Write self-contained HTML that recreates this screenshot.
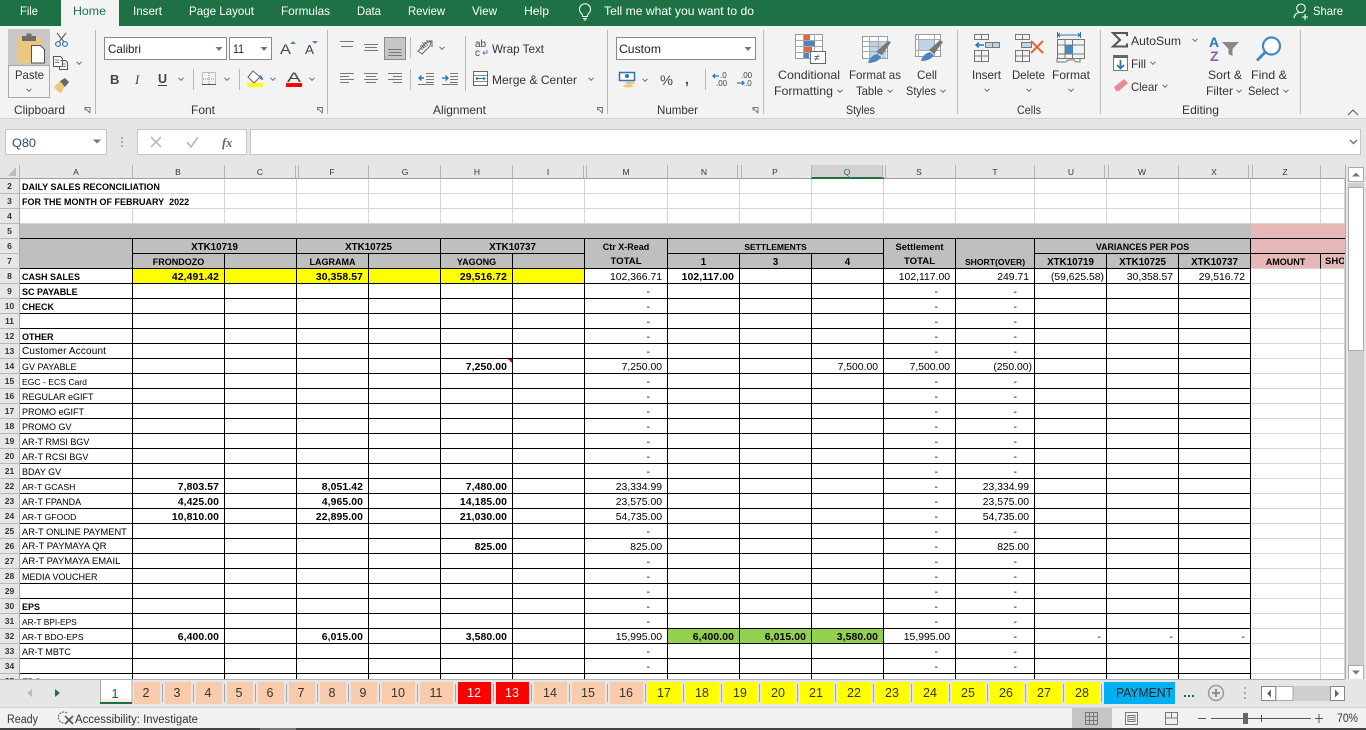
<!DOCTYPE html>
<html><head><meta charset="utf-8"><title>Daily Sales Reconciliation</title>
<style>
html,body{margin:0;padding:0;background:#e6e6e6}
body{width:1366px;height:730px;overflow:hidden;position:relative;font-family:"Liberation Sans",sans-serif}
#s{position:absolute;left:20px;top:179px;width:1325px;height:500px;overflow:hidden;background:#fff}
table{border-collapse:separate;border-spacing:0;table-layout:fixed;width:1325px}
td{height:15px;box-sizing:border-box;padding:2px 0 0 2px;border-right:1px solid #000;border-bottom:1px solid #000;font-size:9px;white-space:nowrap;overflow:hidden;line-height:12px;color:#000;text-align:left}
td:nth-last-child(-n+2){border-color:#d4d4d4}
tr.p td{border-color:#d4d4d4}
td.h,tr.k td.h{background:#bfbfbf;text-align:center;font-weight:bold;font-size:9px;padding:2px 0 0;border-color:#000}
tr.k td.x{font-size:9.8px;padding-top:3px;line-height:11px}
td.pk,tr.k td.pk{background:#e6b8b7;text-align:center;font-weight:bold;padding:2px 0 0}
td.nb,tr.k td.nb{border-bottom:0;padding-top:0}
td.n,td.d,td.e{text-align:right;font-size:10.4px;line-height:11px}
td.n,td.e{padding:3px 5px 0 0}
td.d{padding:3px 17px 0 0}
.b{font-weight:bold}
td.n.b{letter-spacing:.1px}
.y{background:#ff0}
.gr{background:#92d050}
#r{position:absolute;left:0;top:179px;width:20px;height:500px;overflow:hidden;background:#e6e6e6}
#r div{height:15px;box-sizing:border-box;border-bottom:1px solid #b8b8b8;border-right:1px solid #a8a8a8;text-align:center;font-size:8.5px;font-weight:bold;line-height:15px;color:#333}
svg{position:absolute;left:0;top:0}
svg text{font-family:"Liberation Sans",sans-serif;fill:#333}
svg text[style*="font-size:12px"]{font-size:11.6px!important}
</style></head><body>
<div id="r"><div>2</div><div>3</div><div>4</div><div>5</div><div>6</div><div>7</div><div>8</div><div>9</div><div>10</div><div>11</div><div>12</div><div>13</div><div>14</div><div>15</div><div>16</div><div>17</div><div>18</div><div>19</div><div>20</div><div>21</div><div>22</div><div>23</div><div>24</div><div>25</div><div>26</div><div>27</div><div>28</div><div>29</div><div>30</div><div>31</div><div>32</div><div>33</div><div>34</div><div>35</div></div>
<div id="s"><table>
<colgroup><col style="width:113px"><col style="width:92px"><col style="width:72px"><col style="width:72px"><col style="width:72px"><col style="width:72px"><col style="width:72px"><col style="width:83px"><col style="width:72px"><col style="width:72px"><col style="width:72px"><col style="width:72px"><col style="width:79px"><col style="width:72px"><col style="width:72px"><col style="width:72px"><col style="width:70px"><col style="width:24px"></colgroup>
<tr class="p"><td colspan="2" class="b">DAILY SALES RECONCILIATION</td><td></td><td></td><td></td><td></td><td></td><td></td><td></td><td></td><td></td><td></td><td></td><td></td><td></td><td></td><td></td><td></td></tr>
<tr class="p"><td colspan="2" class="b">FOR THE MONTH OF FEBRUARY&nbsp; 2022</td><td></td><td></td><td></td><td></td><td></td><td></td><td></td><td></td><td></td><td></td><td></td><td></td><td></td><td></td><td></td><td></td></tr>
<tr class="p"><td></td><td></td><td></td><td></td><td></td><td></td><td></td><td></td><td></td><td></td><td></td><td></td><td></td><td></td><td></td><td></td><td></td><td></td></tr>
<tr class="k"><td colspan="16" class="h" style="border-right:0"></td><td colspan="2" class="pk" style="border-right:0;border-bottom-color:#000"></td></tr>
<tr class="k"><td rowspan="2" class="h"></td><td colspan="2" class="h x">XTK10719</td><td colspan="2" class="h x">XTK10725</td><td colspan="2" class="h x">XTK10737</td><td class="h nb">Ctr X-Read</td><td colspan="3" class="h" style="font-size:8.5px">SETTLEMENTS</td><td class="h nb" style="font-size:9.4px">Settlement</td><td class="h nb"></td><td colspan="3" class="h" style="font-size:8.85px">VARIANCES PER POS</td><td colspan="2" class="pk" style="border-right:0;border-bottom-color:#000"></td></tr>
<tr class="k"><td class="h">FRONDOZO</td><td class="h"></td><td class="h">LAGRAMA</td><td class="h"></td><td class="h">YAGONG</td><td class="h"></td><td class="h" style="font-size:9.6px">TOTAL</td><td class="h x">1</td><td class="h x">3</td><td class="h x">4</td><td class="h" style="font-size:9.6px">TOTAL</td><td class="h" style="font-size:8.6px">SHORT(OVER)</td><td class="h x">XTK10719</td><td class="h x">XTK10725</td><td class="h x">XTK10737</td><td class="pk" style="border-right-color:#000">AMOUNT</td><td class="pk" style="text-align:left;padding-left:4px;font-size:9.5px">SHORT</td></tr>
<tr><td class="b">CASH SALES</td><td class="n b y">42,491.42</td><td class="y"></td><td class="n b y">30,358.57</td><td class="y"></td><td class="n b y">29,516.72</td><td class="y"></td><td class="n">102,366.71</td><td class="n b">102,117.00</td><td></td><td></td><td class="n">102,117.00</td><td class="n">249.71</td><td class="n" style="padding-right:2px">(59,625.58)</td><td class="n">30,358.57</td><td class="n">29,516.72</td><td></td><td></td></tr>
<tr><td class="b">SC PAYABLE</td><td></td><td></td><td></td><td></td><td></td><td></td><td class="d">-</td><td></td><td></td><td></td><td class="d">-</td><td class="d">-</td><td></td><td></td><td></td><td></td><td></td></tr>
<tr><td class="b">CHECK</td><td></td><td></td><td></td><td></td><td></td><td></td><td class="d">-</td><td></td><td></td><td></td><td class="d">-</td><td class="d">-</td><td></td><td></td><td></td><td></td><td></td></tr>
<tr><td></td><td></td><td></td><td></td><td></td><td></td><td></td><td class="d">-</td><td></td><td></td><td></td><td class="d">-</td><td class="d">-</td><td></td><td></td><td></td><td></td><td></td></tr>
<tr><td class="b">OTHER</td><td></td><td></td><td></td><td></td><td></td><td></td><td class="d">-</td><td></td><td></td><td></td><td class="d">-</td><td class="d">-</td><td></td><td></td><td></td><td></td><td></td></tr>
<tr><td style="font-size:10px;letter-spacing:.15px">Customer Account</td><td></td><td></td><td></td><td></td><td></td><td></td><td class="d">-</td><td></td><td></td><td></td><td class="d">-</td><td class="d">-</td><td></td><td></td><td></td><td></td><td></td></tr>
<tr><td>GV PAYABLE</td><td></td><td></td><td></td><td></td><td class="n b">7,250.00</td><td></td><td class="n">7,250.00</td><td></td><td></td><td class="n">7,500.00</td><td class="n">7,500.00</td><td class="n" style="padding-right:2px">(250.00)</td><td></td><td></td><td></td><td></td><td></td></tr>
<tr><td style="font-size:8.6px">EGC - ECS Card</td><td></td><td></td><td></td><td></td><td></td><td></td><td class="d">-</td><td></td><td></td><td></td><td class="d">-</td><td class="d">-</td><td></td><td></td><td></td><td></td><td></td></tr>
<tr><td>REGULAR eGIFT</td><td></td><td></td><td></td><td></td><td></td><td></td><td class="d">-</td><td></td><td></td><td></td><td class="d">-</td><td class="d">-</td><td></td><td></td><td></td><td></td><td></td></tr>
<tr><td>PROMO eGIFT</td><td></td><td></td><td></td><td></td><td></td><td></td><td class="d">-</td><td></td><td></td><td></td><td class="d">-</td><td class="d">-</td><td></td><td></td><td></td><td></td><td></td></tr>
<tr><td>PROMO GV</td><td></td><td></td><td></td><td></td><td></td><td></td><td class="d">-</td><td></td><td></td><td></td><td class="d">-</td><td class="d">-</td><td></td><td></td><td></td><td></td><td></td></tr>
<tr><td>AR-T RMSI BGV</td><td></td><td></td><td></td><td></td><td></td><td></td><td class="d">-</td><td></td><td></td><td></td><td class="d">-</td><td class="d">-</td><td></td><td></td><td></td><td></td><td></td></tr>
<tr><td>AR-T RCSI BGV</td><td></td><td></td><td></td><td></td><td></td><td></td><td class="d">-</td><td></td><td></td><td></td><td class="d">-</td><td class="d">-</td><td></td><td></td><td></td><td></td><td></td></tr>
<tr><td>BDAY GV</td><td></td><td></td><td></td><td></td><td></td><td></td><td class="d">-</td><td></td><td></td><td></td><td class="d">-</td><td class="d">-</td><td></td><td></td><td></td><td></td><td></td></tr>
<tr><td style="font-size:8.7px">AR-T GCASH</td><td class="n b">7,803.57</td><td></td><td class="n b">8,051.42</td><td></td><td class="n b">7,480.00</td><td></td><td class="n">23,334.99</td><td></td><td></td><td></td><td class="d">-</td><td class="n">23,334.99</td><td></td><td></td><td></td><td></td><td></td></tr>
<tr><td>AR-T FPANDA</td><td class="n b">4,425.00</td><td></td><td class="n b">4,965.00</td><td></td><td class="n b">14,185.00</td><td></td><td class="n">23,575.00</td><td></td><td></td><td></td><td class="d">-</td><td class="n">23,575.00</td><td></td><td></td><td></td><td></td><td></td></tr>
<tr><td style="font-size:8.7px">AR-T GFOOD</td><td class="n b">10,810.00</td><td></td><td class="n b">22,895.00</td><td></td><td class="n b">21,030.00</td><td></td><td class="n">54,735.00</td><td></td><td></td><td></td><td class="d">-</td><td class="n">54,735.00</td><td></td><td></td><td></td><td></td><td></td></tr>
<tr><td style="font-size:9.3px">AR-T ONLINE PAYMENT</td><td></td><td></td><td></td><td></td><td></td><td></td><td class="d">-</td><td></td><td></td><td></td><td class="d">-</td><td class="d">-</td><td></td><td></td><td></td><td></td><td></td></tr>
<tr><td style="font-size:9.55px">AR-T PAYMAYA QR</td><td></td><td></td><td></td><td></td><td class="n b">825.00</td><td></td><td class="n">825.00</td><td></td><td></td><td></td><td class="d">-</td><td class="n">825.00</td><td></td><td></td><td></td><td></td><td></td></tr>
<tr><td style="font-size:9.5px">AR-T PAYMAYA EMAIL</td><td></td><td></td><td></td><td></td><td></td><td></td><td class="d">-</td><td></td><td></td><td></td><td class="d">-</td><td class="d">-</td><td></td><td></td><td></td><td></td><td></td></tr>
<tr><td>MEDIA VOUCHER</td><td></td><td></td><td></td><td></td><td></td><td></td><td class="d">-</td><td></td><td></td><td></td><td class="d">-</td><td class="d">-</td><td></td><td></td><td></td><td></td><td></td></tr>
<tr><td></td><td></td><td></td><td></td><td></td><td></td><td></td><td class="d">-</td><td></td><td></td><td></td><td class="d">-</td><td class="d">-</td><td></td><td></td><td></td><td></td><td></td></tr>
<tr><td class="b">EPS</td><td></td><td></td><td></td><td></td><td></td><td></td><td class="d">-</td><td></td><td></td><td></td><td class="d">-</td><td class="d">-</td><td></td><td></td><td></td><td></td><td></td></tr>
<tr><td style="font-size:8.4px">AR-T BPI-EPS</td><td></td><td></td><td></td><td></td><td></td><td></td><td class="d">-</td><td></td><td></td><td></td><td class="d">-</td><td class="d">-</td><td></td><td></td><td></td><td></td><td></td></tr>
<tr><td style="font-size:8.7px">AR-T BDO-EPS</td><td class="n b">6,400.00</td><td></td><td class="n b">6,015.00</td><td></td><td class="n b">3,580.00</td><td></td><td class="n">15,995.00</td><td class="n b gr">6,400.00</td><td class="n b gr">6,015.00</td><td class="n b gr">3,580.00</td><td class="n">15,995.00</td><td class="d">-</td><td class="e">-</td><td class="e">-</td><td class="e">-</td><td></td><td></td></tr>
<tr><td>AR-T MBTC</td><td></td><td></td><td></td><td></td><td></td><td></td><td class="d">-</td><td></td><td></td><td></td><td class="d">-</td><td class="d">-</td><td></td><td></td><td></td><td></td><td></td></tr>
<tr><td></td><td></td><td></td><td></td><td></td><td></td><td></td><td class="d">-</td><td></td><td></td><td></td><td class="d">-</td><td class="d">-</td><td></td><td></td><td></td><td></td><td></td></tr>
<tr><td class="b">EDC</td><td></td><td></td><td></td><td></td><td></td><td></td><td class="d">-</td><td></td><td></td><td></td><td class="d">-</td><td class="d">-</td><td></td><td></td><td></td><td></td><td></td></tr>
</table></div>

<svg width="1366" height="730" viewBox="0 0 1366 730" xmlns="http://www.w3.org/2000/svg">
<defs><path id="c" d="M-2.5-1.2 0 1.3 2.5-1.2" fill="none" stroke="#666" stroke-width="1"/><path id="tr" d="M-3.5-2h7L0 2z" fill="#777"/>
<path id="lc" d="M0 .5h5.5v5.5M5.5 6L1 1.5M.5 3.5V.5" fill="none" stroke="#777"/></defs>

<!-- Title bar -->
<rect width="1366" height="26" fill="#1e7145"/>
<rect x="61" y="0" width="58" height="27" fill="#f3f3f3"/>
<g style="font-size:12px">
<text x="20" y="15" textLength="18" lengthAdjust="spacingAndGlyphs" style="fill:#fff">File</text>
<text x="73" y="15" textLength="33" lengthAdjust="spacingAndGlyphs" style="fill:#1e7145">Home</text>
<text x="133" y="15" textLength="29" lengthAdjust="spacingAndGlyphs" style="fill:#fff">Insert</text>
<text x="189" y="15" textLength="65" lengthAdjust="spacingAndGlyphs" style="fill:#fff">Page Layout</text>
<text x="281" y="15" textLength="49" lengthAdjust="spacingAndGlyphs" style="fill:#fff">Formulas</text>
<text x="357" y="15" textLength="24" lengthAdjust="spacingAndGlyphs" style="fill:#fff">Data</text>
<text x="408" y="15" textLength="37" lengthAdjust="spacingAndGlyphs" style="fill:#fff">Review</text>
<text x="472" y="15" textLength="25" lengthAdjust="spacingAndGlyphs" style="fill:#fff">View</text>
<text x="524" y="15" textLength="25" lengthAdjust="spacingAndGlyphs" style="fill:#fff">Help</text>
<text x="604" y="15" textLength="150" lengthAdjust="spacingAndGlyphs" style="fill:#fff">Tell me what you want to do</text>
<text x="1313" y="15" textLength="30" lengthAdjust="spacingAndGlyphs" style="fill:#fff">Share</text>
</g>
<path d="M581.5 13.5a5.5 5.5 0 1 1 7 0c-1 1-1.2 2-1.2 3h-4.6c0-1-.2-2-1.2-3zM583 18.5h4M583.7 20h2.6" fill="none" stroke="#fff" stroke-width="1.1"/>
<path d="M1301 4a4.3 4.3 0 1 1 0 8.6 4.3 4.3 0 0 1 0-8.6zM1294 18c.5-3.5 3-5.4 5.5-5.6M1305 14v6M1302 17h6" fill="none" stroke="#fff" stroke-width="1.1"/>

<!-- Ribbon -->
<rect y="26" width="1366" height="92" fill="#f3f3f3"/>
<rect x="61" y="26" width="58" height="1" fill="#f3f3f3"/>
<rect y="118" width="1366" height="1" fill="#d2d2d2"/>
<rect y="119" width="1366" height="46" fill="#e6e6e6"/>
<g fill="#b8b8b8"><rect x="95" y="30" width="1" height="84"/><rect x="327" y="30" width="1" height="84"/><rect x="607" y="30" width="1" height="84"/><rect x="763" y="30" width="1" height="84"/><rect x="957" y="30" width="1" height="84"/><rect x="1100" y="30" width="1" height="84"/><rect x="1300" y="30" width="1" height="84"/>
<rect x="193" y="69" width="1" height="21"/><rect x="239" y="69" width="1" height="21"/><rect x="410" y="37" width="1" height="21"/><rect x="410" y="69" width="1" height="21"/><rect x="465" y="36" width="1" height="55"/><rect x="705" y="69" width="1" height="21"/></g>

<!-- Clipboard -->
<rect x="8" y="29" width="42" height="37" fill="#c8c8c8"/>
<rect x="8.5" y="65.5" width="41" height="32" fill="#f3f3f3" stroke="#aaa"/>
<rect x="17" y="37" width="24" height="26" fill="#ecc77f"/>
<rect x="22" y="36" width="14" height="5" fill="#6d6d6d"/><rect x="26.5" y="33.5" width="5" height="4" fill="#6d6d6d"/>
<path d="M31.5 45.5h9l4 4v13.5h-13z" fill="#fff" stroke="#555"/>
<text x="15" y="79" textLength="29" lengthAdjust="spacingAndGlyphs" style="font-size:12px">Paste</text>
<use href="#c" x="29" y="90"/>
<path d="M57 33l7 9M66 33l-7 9" stroke="#666" stroke-width="1.2" fill="none"/><circle cx="58" cy="44" r="2.4" fill="none" stroke="#4a7fb5" stroke-width="1.3"/><circle cx="65" cy="44" r="2.4" fill="none" stroke="#4a7fb5" stroke-width="1.3"/>
<path d="M53.5 56.5h7l2 2v8h-9zM60.5 60.5h5l2 2v7h-8v-3" fill="#fff" stroke="#555"/><path d="M55 60h4M55 62.5h4M61.5 64h4.5M61.5 66.5h4.5" stroke="#4a86c0"/>
<use href="#c" x="79" y="63"/>
<path d="M54 87l6-6 5 5-4 7c-2-.5-5-3-7-6z" fill="#ecc77f"/><path d="M60 81l5-3 4 4-4 5z" fill="#666"/>
<text x="14" y="114" textLength="51" lengthAdjust="spacingAndGlyphs" style="font-size:12px">Clipboard</text>
<use href="#lc" x="84.5" y="107"/>

<!-- Font -->
<rect x="104.5" y="37.5" width="122" height="22" fill="#fff" stroke="#8a8a8a"/>
<rect x="229.5" y="37.5" width="42" height="22" fill="#fff" stroke="#8a8a8a"/>
<text x="108" y="53" textLength="33" lengthAdjust="spacingAndGlyphs" style="font-size:12px;fill:#222">Calibri</text>
<text x="233" y="53" textLength="11" lengthAdjust="spacingAndGlyphs" style="font-size:12px;fill:#222">11</text>
<use href="#tr" x="219" y="49"/><use href="#tr" x="264" y="49"/>
<text x="280" y="54" textLength="11" lengthAdjust="spacingAndGlyphs" style="font-size:14px;fill:#444">A</text><path d="M290 44l3-3 3 3z" fill="#4a86c0"/>
<text x="305" y="54" textLength="9" lengthAdjust="spacingAndGlyphs" style="font-size:12.5px;fill:#444">A</text><path d="M312 41h6l-3 3z" fill="#4a86c0"/>
<text x="110" y="84" style="font-size:13px;font-weight:bold;fill:#444">B</text>
<text x="135" y="84" style="font-size:13px;font-style:italic;font-family:'Liberation Serif',serif;fill:#444">I</text>
<text x="158" y="83" style="font-size:12.5px;font-weight:bold;fill:#444">U</text><rect x="158" y="85" width="9" height="1" fill="#444"/>
<use href="#c" x="181" y="79"/>
<rect x="202.5" y="72.5" width="13" height="12" fill="none" stroke="#888" stroke-dasharray="1 1"/><path d="M209 73v12M203 79h12" stroke="#888" stroke-dasharray="1 1"/><rect x="202" y="84" width="14" height="1" fill="#555"/>
<use href="#c" x="227" y="79"/>
<path d="M253 71l7 6-6 6-6-6z" fill="#fff" stroke="#666"/><path d="M260 75c2 1 3 3 3 5-2 0-3-1-4-3z" fill="#4a86c0"/><rect x="247" y="83" width="16" height="4" fill="#ff0"/>
<use href="#c" x="273" y="79"/>
<text x="287" y="82" textLength="14" lengthAdjust="spacingAndGlyphs" style="font-size:14px;fill:#444">A</text><rect x="286" y="83" width="16" height="4" fill="#f00"/>
<use href="#c" x="312" y="79"/>
<text x="191" y="114" textLength="24" lengthAdjust="spacingAndGlyphs" style="font-size:12px">Font</text>
<use href="#lc" x="317" y="107"/>

<!-- Alignment -->
<g stroke="#777" fill="none"><path d="M340 41.5h14M341 46.5h12"/><path d="M364 44.5h14M365 47.5h12M364 50.5h14"/></g>
<rect x="384.5" y="37.5" width="21" height="22" fill="#c6c6c6" stroke="#8a8a8a"/>
<path d="M388 49.5h14M389 52.5h12M388 55.5h14" stroke="#777"/>
<path d="M418 51l8-8 5-2-1 5-8 8zM426 41h6v6" fill="none" stroke="#666"/><text x="419" y="49" style="font-size:8px;fill:#555" transform="rotate(-38 422 46)">ab</text>
<use href="#c" x="442" y="48"/>
<g stroke="#777"><path d="M340 73.5h14M340 76.5h9M340 79.5h14M340 82.5h9M364 73.5h14M366 76.5h10M364 79.5h14M366 82.5h10M388 73.5h14M393 76.5h9M388 79.5h14M393 82.5h9"/>
<path d="M426 73.5h8M426 76.5h8M426 79.5h8M426 82.5h8M418 84.5h16M450 73.5h8M450 76.5h8M450 79.5h8M450 82.5h8M442 84.5h16"/></g>
<path d="M424 78h-5M421.5 75.5L419 78l2.5 2.5M442 78h6M445.5 75.5L448 78l-2.5 2.5" stroke="#2e75b6" stroke-width="1.4" fill="none"/>
<text x="475" y="47" style="font-size:10px;fill:#444">ab</text><text x="475" y="56" style="font-size:10px;fill:#444">c</text><path d="M487 50v3h-4M484.5 51.5L483 53l1.5 1.5" stroke="#4a86c0" fill="none"/>
<text x="492" y="53" textLength="52" lengthAdjust="spacingAndGlyphs" style="font-size:12px">Wrap Text</text>
<rect x="473.5" y="71.5" width="14" height="14" fill="#fff" stroke="#666"/><path d="M474 75.5h13M474 81.5h13" stroke="#888"/><path d="M476 78.5h9M477.5 77l-1.5 1.5 1.5 1.5M483.5 77l1.5 1.5-1.5 1.5" stroke="#2e75b6" fill="none"/>
<text x="492" y="84" textLength="85" lengthAdjust="spacingAndGlyphs" style="font-size:12px">Merge &amp; Center</text>
<use href="#c" x="591" y="79"/>
<text x="433" y="114" textLength="53" lengthAdjust="spacingAndGlyphs" style="font-size:12px">Alignment</text>
<use href="#lc" x="597" y="107"/>

<!-- Number -->
<rect x="616.5" y="37.5" width="139" height="22" fill="#fff" stroke="#8a8a8a"/>
<text x="619" y="53" textLength="42" lengthAdjust="spacingAndGlyphs" style="font-size:12px;fill:#222">Custom</text>
<use href="#tr" x="748" y="49"/>
<rect x="619.5" y="72.5" width="15" height="8" fill="#fff" stroke="#2e75b6" stroke-width="1.5"/><circle cx="627" cy="76" r="2" fill="#2e75b6"/>
<ellipse cx="630" cy="83" rx="5" ry="1.5" fill="#ecc77f"/><ellipse cx="628" cy="86" rx="5" ry="1.5" fill="#ecc77f"/>
<use href="#c" x="645" y="80"/>
<text x="660" y="85" textLength="13" lengthAdjust="spacingAndGlyphs" style="font-size:14px;fill:#444">%</text>
<text x="685" y="84" style="font-size:14px;font-weight:bold;fill:#444">,</text>
<text x="720" y="78" style="font-size:8px;fill:#444">.0</text><text x="716" y="86" style="font-size:8px;fill:#444">.00</text><path d="M713 76h6M715 74l-2 2 2 2" stroke="#2e75b6" stroke-width="1.3" fill="none"/>
<text x="741" y="78" style="font-size:8px;fill:#444">.00</text><text x="745" y="86" style="font-size:8px;fill:#444">.0</text><path d="M737 83h7M742 81l2 2-2 2" stroke="#2e75b6" stroke-width="1.3" fill="none"/>
<text x="657" y="114" textLength="41" lengthAdjust="spacingAndGlyphs" style="font-size:12px">Number</text>
<use href="#lc" x="752.5" y="107"/>

<!-- Styles -->
<rect x="795.5" y="34.5" width="27" height="24" fill="#fff" stroke="#999"/>
<path d="M795 40.5h27M795 46.5h27M795 52.5h27M803.5 34v24M814.5 34v24" stroke="#aaa" fill="none"/>
<rect x="804" y="35" width="6" height="5" fill="#e0683c"/><rect x="804" y="41" width="11" height="5" fill="#4a86c0"/><rect x="804" y="47" width="8" height="5" fill="#e0683c"/><rect x="804" y="53" width="5" height="5" fill="#4a86c0"/>
<rect x="810.5" y="51.5" width="15" height="12" fill="#fff" stroke="#666"/><text x="814" y="61" style="font-size:10px;fill:#444">≠</text>
<text x="778" y="79" textLength="62" lengthAdjust="spacingAndGlyphs" style="font-size:12px">Conditional</text>
<text x="774" y="95" textLength="59" lengthAdjust="spacingAndGlyphs" style="font-size:12px">Formatting</text>
<use href="#c" x="840" y="91"/>
<rect x="862.5" y="36.5" width="25" height="22" fill="#fff" stroke="#999"/>
<rect x="869" y="41" width="17" height="17" fill="#bcd4e8"/>
<path d="M862 41.5h25M862 46.5h25M862 51.5h25M869.5 36v22M878.5 36v22" stroke="#aaa"/>
<path d="M876 52l12-11 3 1-9 13z" fill="#777"/><path d="M868 63c1-5 5-8 9-9l4 3c-2 4-7 6-13 6z" fill="#4a86c0"/>
<text x="849" y="79" textLength="52" lengthAdjust="spacingAndGlyphs" style="font-size:12px">Format as</text>
<text x="856" y="95" textLength="27" lengthAdjust="spacingAndGlyphs" style="font-size:12px">Table</text>
<use href="#c" x="890" y="91"/>
<rect x="915.5" y="34.5" width="25" height="22" fill="#fff" stroke="#999"/>
<rect x="919" y="40" width="15" height="10" fill="#bcd4e8"/>
<path d="M915 39.5h25M915 50.5h25M918.5 34v22M934.5 34v22" stroke="#aaa"/>
<path d="M929 50l11-10 3 2-9 12z" fill="#777"/><path d="M921 61c1-5 5-8 9-9l4 3c-2 4-7 6-13 6z" fill="#4a86c0"/>
<text x="917" y="79" textLength="20" lengthAdjust="spacingAndGlyphs" style="font-size:12px">Cell</text>
<text x="906" y="95" textLength="30" lengthAdjust="spacingAndGlyphs" style="font-size:12px">Styles</text>
<use href="#c" x="943" y="91"/>
<text x="846" y="114" textLength="29" lengthAdjust="spacingAndGlyphs" style="font-size:12px">Styles</text>

<!-- Cells -->
<g fill="none" stroke="#777">
<rect x="974.5" y="34.5" width="14" height="5"/><path d="M981.5 34v5"/>
<rect x="985.5" y="42.5" width="14" height="5" fill="#bcd4e8"/><path d="M992.5 42v5"/>
<rect x="974.5" y="50.5" width="14" height="11"/><path d="M981.5 50v11M974 56h14"/>
<rect x="1015.5" y="34.5" width="14" height="5"/><path d="M1022.5 34v5"/>
<rect x="1021.5" y="42.5" width="10" height="5" fill="#bcd4e8"/>
<rect x="1015.5" y="50.5" width="14" height="11"/><path d="M1022.5 50v11M1015 56h14"/>
<rect x="1057.5" y="39.5" width="27" height="19"/><path d="M1057 45h27M1057 54h27M1065 39v19M1072.5 39v19"/><path d="M1057 58v4h9l2-2h6l2 2h4v-4"/>
</g>
<path d="M984 45h-8M979 42.5L976 45l3 2.5" stroke="#2e75b6" stroke-width="1.5" fill="none"/>
<path d="M1031 41l12 12M1043 41l-12 12" stroke="#e0683c" stroke-width="2"/>
<rect x="1065" y="45" width="8" height="9" fill="#4a86c0"/>
<path d="M1058 35h22M1060 33l-2 2 2 2M1078 33l2 2-2 2M1057.5 32v6M1080.5 32v6" stroke="#2e75b6" fill="none"/>
<text x="972" y="79" textLength="29" lengthAdjust="spacingAndGlyphs" style="font-size:12px">Insert</text>
<text x="1012" y="79" textLength="33" lengthAdjust="spacingAndGlyphs" style="font-size:12px">Delete</text>
<text x="1052" y="79" textLength="38" lengthAdjust="spacingAndGlyphs" style="font-size:12px">Format</text>
<use href="#c" x="987" y="90"/><use href="#c" x="1029" y="90"/><use href="#c" x="1071" y="90"/>
<text x="1017" y="114" textLength="24" lengthAdjust="spacingAndGlyphs" style="font-size:12px">Cells</text>

<!-- Editing -->
<path d="M1127 36v-3h-14l7 7-7 6.5h14v-3" fill="none" stroke="#555" stroke-width="2"/>
<text x="1131" y="45" textLength="50" lengthAdjust="spacingAndGlyphs" style="font-size:12px">AutoSum</text>
<use href="#c" x="1195" y="40"/>
<rect x="1113.5" y="55.5" width="14" height="15" fill="#fff" stroke="#777"/><rect x="1113" y="55" width="15" height="3" fill="#666"/>
<path d="M1120.5 60v8M1117 65l3.5 3.5L1124 65" stroke="#2e75b6" stroke-width="1.8" fill="none"/>
<text x="1131" y="68" textLength="15" lengthAdjust="spacingAndGlyphs" style="font-size:12px">Fill</text>
<use href="#c" x="1153" y="63"/>
<path d="M1114 87l10-8 4 4-9 8h-3z" fill="#e98a96"/>
<text x="1131" y="91" textLength="27" lengthAdjust="spacingAndGlyphs" style="font-size:12px">Clear</text>
<use href="#c" x="1165" y="86"/>
<text x="1209" y="47" style="font-size:14px;font-weight:bold;fill:#2e75b6">A</text>
<text x="1210" y="61" style="font-size:14px;font-weight:bold;fill:#8e5bb5">Z</text>
<path d="M1222 42h17l-6.5 7v7l-4-2v-5z" fill="#888"/>
<text x="1208" y="79" textLength="34" lengthAdjust="spacingAndGlyphs" style="font-size:12px">Sort &amp;</text>
<text x="1206" y="95" textLength="27" lengthAdjust="spacingAndGlyphs" style="font-size:12px">Filter</text>
<use href="#c" x="1239" y="91"/>
<circle cx="1271.5" cy="46" r="8.5" fill="#fff" stroke="#4a86c0" stroke-width="2.2"/><path d="M1265 52.5l-8 8" stroke="#4a86c0" stroke-width="3"/>
<text x="1251" y="79" textLength="36" lengthAdjust="spacingAndGlyphs" style="font-size:12px">Find &amp;</text>
<text x="1248" y="95" textLength="31" lengthAdjust="spacingAndGlyphs" style="font-size:12px">Select</text>
<use href="#c" x="1286" y="91"/>
<text x="1182" y="114" textLength="37" lengthAdjust="spacingAndGlyphs" style="font-size:12px">Editing</text>
<path d="M1348 115l5-5 5 5" fill="none" stroke="#555"/>

<!-- Formula bar -->
<rect x="5.5" y="129.5" width="101" height="25" fill="#fff" stroke="#c6c6c6"/>
<text x="12" y="147" textLength="24" lengthAdjust="spacingAndGlyphs" style="font-size:12px;fill:#2b4a6f">Q80</text>
<path d="M93 139.5h8l-4 4z" fill="#777"/>
<path d="M122 137v2M122 141v2M122 145v2" stroke="#aaa" stroke-width="2"/>
<rect x="137.5" y="129.5" width="109" height="25" fill="#fff" stroke="#c6c6c6"/>
<path d="M151 137l10 10M161 137l-10 10" stroke="#bbb" stroke-width="1.6"/>
<path d="M187 142l4 5 7-10" stroke="#bbb" stroke-width="1.8" fill="none"/>
<text x="222" y="147" style="font-size:12.5px;font-style:italic;font-family:'Liberation Serif',serif;fill:#666;font-weight:bold">fx</text>
<rect x="250.5" y="129.5" width="1110" height="25" fill="#fff" stroke="#c6c6c6"/>
<path d="M1350 140l3.5 3.5 3.5-3.5" fill="none" stroke="#777" stroke-width="1.5"/>

<!-- Column header -->
<rect y="165" width="1345" height="13" fill="#e6e6e6"/>
<rect x="811" y="165" width="72" height="13" fill="#d2d2d2"/>
<rect y="178" width="1345" height="1" fill="#9e9e9e"/>
<rect x="811" y="177" width="73" height="2" fill="#1e7145"/>
<path d="M16 167v9h-8z" fill="#bdbdbd"/>
<g fill="#b4b4b4"><rect x="19" y="165" width="1" height="13"/><rect x="132" y="165" width="1" height="13"/><rect x="224" y="165" width="1" height="13"/><rect x="295" y="165" width="1" height="13"/><rect x="298" y="165" width="1" height="13"/><rect x="368" y="165" width="1" height="13"/><rect x="440" y="165" width="1" height="13"/><rect x="512" y="165" width="1" height="13"/><rect x="583" y="165" width="1" height="13"/><rect x="586" y="165" width="1" height="13"/><rect x="667" y="165" width="1" height="13"/><rect x="737" y="165" width="1" height="13"/><rect x="741" y="165" width="1" height="13"/><rect x="811" y="165" width="1" height="13"/><rect x="882" y="165" width="1" height="13"/><rect x="885" y="165" width="1" height="13"/><rect x="955" y="165" width="1" height="13"/><rect x="1034" y="165" width="1" height="13"/><rect x="1104" y="165" width="1" height="13"/><rect x="1108" y="165" width="1" height="13"/><rect x="1178" y="165" width="1" height="13"/><rect x="1248" y="165" width="1" height="13"/><rect x="1252" y="165" width="1" height="13"/><rect x="1320" y="165" width="1" height="13"/></g>
<g text-anchor="middle" style="font-size:8.5px">
<text x="76" y="175">A</text><text x="178" y="175">B</text><text x="260" y="175">C</text><text x="332" y="175">F</text><text x="405" y="175">G</text><text x="477" y="175">H</text><text x="548" y="175">I</text><text x="626" y="175">M</text><text x="704" y="175">N</text><text x="775" y="175">P</text><text x="847" y="175" style="fill:#1e7145">Q</text><text x="919" y="175">S</text><text x="995" y="175">T</text><text x="1071" y="175">U</text><text x="1142" y="175">W</text><text x="1214" y="175">X</text><text x="1285" y="175">Z</text>
</g>
<!-- comment marker -->
<path d="M508 359h4v4z" fill="#e00"/>

<!-- Vertical scrollbar -->
<rect x="1345" y="165" width="21" height="515" fill="#e6e6e6"/>
<rect x="1345" y="165" width="1" height="515" fill="#ababab"/>
<rect x="1348" y="183" width="16" height="482" fill="#cfcfcf"/>
<rect x="1348.5" y="167.5" width="15" height="14" fill="#fff" stroke="#aaa"/><path d="M1352 176.5h8l-4-4z" fill="#777"/>
<rect x="1348.5" y="187.5" width="15" height="163" fill="#fff" stroke="#aaa"/>
<rect x="1348.5" y="665.5" width="15" height="14" fill="#fff" stroke="#aaa"/><path d="M1352 670.5h8l-4 4z" fill="#777"/>

<!-- Sheet tabs -->
<rect y="679" width="1366" height="28" fill="#e6e6e6"/>
<rect y="679" width="1345" height="1" fill="#ababab"/>
<path d="M32 689v8l-5-4z" fill="#bbb"/><path d="M55 689v8l5-4z" fill="#1e7145"/>
<defs><linearGradient id="ag" x1="0" y1="0" x2="0" y2="1"><stop offset=".7" stop-color="#fff"/><stop offset="1" stop-color="#f8e0cf"/></linearGradient></defs>
<rect x="100.5" y="679.5" width="31.5" height="24" fill="url(#ag)" stroke="#ababab"/>
<rect x="100" y="702" width="32" height="2" fill="#1e7145"/>
<text x="115" y="698" text-anchor="middle" style="font-size:13px;fill:#1e5d3a">1</text>
<g fill="#f8cbad">
<rect x="134" y="682" width="26" height="22"/><rect x="165" y="682" width="26" height="22"/><rect x="196" y="682" width="26" height="22"/><rect x="227" y="682" width="26" height="22"/><rect x="258" y="682" width="26" height="22"/><rect x="289" y="682" width="26" height="22"/><rect x="320" y="682" width="26" height="22"/><rect x="351" y="682" width="26" height="22"/><rect x="382" y="682" width="33" height="22"/><rect x="420" y="682" width="33" height="22"/><rect x="534" y="682" width="33" height="22"/><rect x="572" y="682" width="33" height="22"/><rect x="610" y="682" width="33" height="22"/></g>
<g fill="#f00"><rect x="458" y="682" width="33" height="22"/><rect x="496" y="682" width="33" height="22"/></g>
<g fill="#ff0"><rect x="648" y="682" width="33" height="22"/><rect x="686" y="682" width="33" height="22"/><rect x="724" y="682" width="33" height="22"/><rect x="762" y="682" width="33" height="22"/><rect x="800" y="682" width="33" height="22"/><rect x="838" y="682" width="33" height="22"/><rect x="876" y="682" width="33" height="22"/><rect x="914" y="682" width="33" height="22"/><rect x="952" y="682" width="33" height="22"/><rect x="990" y="682" width="33" height="22"/><rect x="1028" y="682" width="33" height="22"/><rect x="1066" y="682" width="33" height="22"/></g>
<rect x="1104" y="682" width="71" height="22" fill="#00b0f0"/>
<g fill="#a6a6a6"><rect x="162" y="684" width="1" height="18"/><rect x="193" y="684" width="1" height="18"/><rect x="224" y="684" width="1" height="18"/><rect x="255" y="684" width="1" height="18"/><rect x="286" y="684" width="1" height="18"/><rect x="317" y="684" width="1" height="18"/><rect x="348" y="684" width="1" height="18"/><rect x="379" y="684" width="1" height="18"/><rect x="417" y="684" width="1" height="18"/><rect x="455" y="684" width="1" height="18"/><rect x="493" y="684" width="1" height="18"/><rect x="531" y="684" width="1" height="18"/><rect x="569" y="684" width="1" height="18"/><rect x="607" y="684" width="1" height="18"/><rect x="645" y="684" width="1" height="18"/><rect x="683" y="684" width="1" height="18"/><rect x="721" y="684" width="1" height="18"/><rect x="759" y="684" width="1" height="18"/><rect x="797" y="684" width="1" height="18"/><rect x="835" y="684" width="1" height="18"/><rect x="873" y="684" width="1" height="18"/><rect x="911" y="684" width="1" height="18"/><rect x="949" y="684" width="1" height="18"/><rect x="987" y="684" width="1" height="18"/><rect x="1025" y="684" width="1" height="18"/><rect x="1063" y="684" width="1" height="18"/><rect x="1101" y="684" width="1" height="18"/></g>
<g text-anchor="middle" style="font-size:12.5px">
<text x="146" y="697">2</text><text x="177" y="697">3</text><text x="208" y="697">4</text><text x="239" y="697">5</text><text x="270" y="697">6</text><text x="301" y="697">7</text><text x="332" y="697">8</text><text x="363" y="697">9</text><text x="398" y="697">10</text><text x="436" y="697">11</text><text x="474" y="697" style="fill:#fff">12</text><text x="512" y="697" style="fill:#fff">13</text><text x="550" y="697">14</text><text x="588" y="697">15</text><text x="626" y="697">16</text><text x="664" y="697">17</text><text x="702" y="697">18</text><text x="740" y="697">19</text><text x="778" y="697">20</text><text x="816" y="697">21</text><text x="854" y="697">22</text><text x="892" y="697">23</text><text x="930" y="697">24</text><text x="968" y="697">25</text><text x="1006" y="697">26</text><text x="1044" y="697">27</text><text x="1082" y="697">28</text>
</g>
<text x="1116" y="697" textLength="57" lengthAdjust="spacingAndGlyphs" style="font-size:12.5px;fill:#222">PAYMENT</text>
<g fill="#1e7145"><rect x="1184" y="695" width="2" height="2"/><rect x="1188" y="695" width="2" height="2"/><rect x="1192" y="695" width="2" height="2"/></g>
<circle cx="1216" cy="693" r="7.5" fill="none" stroke="#999" stroke-width="1.4"/><path d="M1216 689v8M1212 693h8" stroke="#888" stroke-width="1.8"/>
<path d="M1245 687v2M1245 692v2M1245 697v2" stroke="#aaa" stroke-width="2"/>
<rect x="1262" y="686" width="83" height="15" fill="#cfcfcf"/>
<rect x="1261.5" y="686.5" width="14" height="14" fill="#fff" stroke="#888"/><path d="M1271 689.5v8l-4-4z" fill="#666"/>
<rect x="1276" y="686.5" width="17" height="14" fill="#fff" stroke="#aaa"/>
<rect x="1330.5" y="686.5" width="14" height="14" fill="#fff" stroke="#888"/><path d="M1335 689.5v8l4-4z" fill="#666"/>

<!-- Status bar -->
<rect y="707" width="1366" height="21" fill="#f1f1f1"/>
<rect y="707" width="1366" height="1" fill="#d4d4d4"/>
<rect y="728" width="1366" height="2" fill="#444"/><rect x="260" y="728" width="36" height="2" fill="#777"/>
<text x="7" y="723" textLength="31" lengthAdjust="spacingAndGlyphs" style="font-size:11.5px">Ready</text>
<path d="M67 713a5.5 5.5 0 1 0-3 10" fill="none" stroke="#555" stroke-dasharray="2 1"/><path d="M65 716l8 8M73 716l-8 8" stroke="#555" stroke-width="1.6"/>
<text x="75" y="723" textLength="123" lengthAdjust="spacingAndGlyphs" style="font-size:11.5px">Accessibility: Investigate</text>
<rect x="1072" y="708" width="40" height="20" fill="#c6c6c6"/>
<path d="M1085.5 712.5h12v12h-12zM1089.5 712v13M1093.5 712v13M1085 716.5h13M1085 720.5h13" fill="none" stroke="#777"/>
<rect x="1125.5" y="712.5" width="12" height="12" fill="none" stroke="#777"/><path d="M1128 715.5h7v6h-7zM1129 717.5h5M1129 719.5h5" fill="none" stroke="#777"/>
<path d="M1165.5 712.5h12v12h-12zM1171.5 712v6h-6M1171.5 712v6h6" fill="none" stroke="#777"/>
<rect x="1198" y="718" width="8" height="1" fill="#555"/>
<rect x="1211" y="718" width="100" height="1" fill="#555"/>
<rect x="1243" y="713" width="5" height="11" fill="#666"/>
<rect x="1261" y="715" width="1" height="7" fill="#555"/>
<path d="M1319 714v9M1315 718.5h8" stroke="#555"/>
<text x="1337" y="722" textLength="21" lengthAdjust="spacingAndGlyphs" style="font-size:11.5px">70%</text>
</svg>
</body></html>
